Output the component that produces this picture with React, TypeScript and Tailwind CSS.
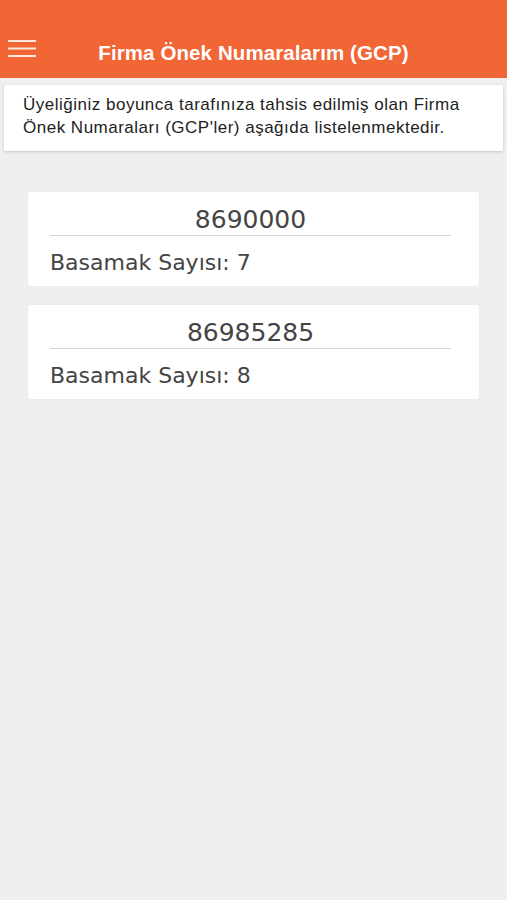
const gcps = [
  { number: '8690000', digits: 7 },
  { number: '86985285', digits: 8 },
];

function MenuIcon() {
  return (
    <svg width="28" height="18" viewBox="0 0 28 18" className="block">
      <rect x="0" y="0" width="28" height="2" fill="#fde8dc" />
      <rect x="0" y="7.5" width="28" height="2" fill="#fde8dc" />
      <rect x="0" y="15" width="28" height="2" fill="#fde8dc" />
    </svg>
  );
}

export default function App() {
  return (
    <div className="min-h-[900px] bg-[#efefef] font-['Liberation_Sans',Arial,sans-serif]">
      <header className="relative flex h-[78px] items-end justify-center bg-[#f26535] pb-[13px]">
        <button className="absolute left-[8px] top-[40px]">
          <MenuIcon />
        </button>
        <h1 className="text-[20.5px] font-bold leading-[24px] tracking-[0.1px] text-white">
          Firma Önek Numaralarım (GCP)
        </h1>
      </header>

      <div className="mx-[4px] mt-[7px] rounded-[2px] bg-white pb-[12px] pl-[19px] pr-[10px] pt-[8px] shadow-[0_1px_3px_rgba(0,0,0,0.18)]">
        <p className="text-[17px] leading-[23px] tracking-[0.5px] text-[#222]">
          Üyeliğiniz boyunca tarafınıza tahsis edilmiş olan Firma Önek Numaraları (GCP'ler)
          aşağıda listelenmektedir.
        </p>
      </div>

      <div className="mx-[28px] mt-[41px] flex flex-col gap-[19px]">
        {gcps.map((g) => (
          <div
            key={g.number}
            className="rounded-[3px] bg-white pb-[10px] pl-[22px] pr-[28px] pt-[13px] shadow-[0_0_2px_rgba(0,0,0,0.06)] font-['DejaVu_Sans',Verdana,sans-serif] text-[#444]"
          >
            <div className="border-b border-[#d6d6d6] text-center text-[25px] leading-[30px]">
              {g.number}
            </div>
            <div className="mt-[14px] text-[22px] leading-[26px]">
              Basamak Sayısı: {g.digits}
            </div>
          </div>
        ))}
      </div>
    </div>
  );
}
